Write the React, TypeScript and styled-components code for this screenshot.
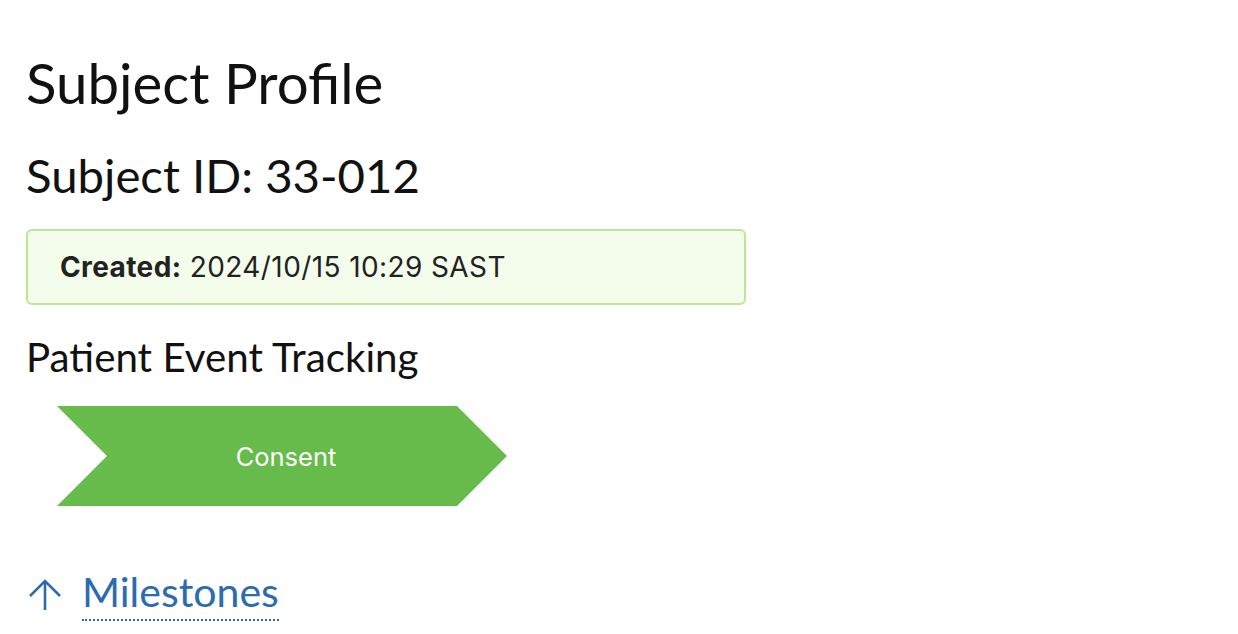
import React from 'react';
import styled, { createGlobalStyle } from 'styled-components';

const GlobalStyle = createGlobalStyle`
	html, body {
		margin: 0;
		padding: 0;
		background: #ffffff;
	}
	body {
		font-family: 'Lato', 'Noto Sans', sans-serif;
		color: #111111;
	}
`;

const Page = styled.div`
	display: flex;
	flex-direction: column;
	align-items: flex-start;
	padding: 48px 26px 0 26px;
`;

const Title = styled.h1`
	margin: 0;
	font-size: 56.4px;
	font-weight: 400;
	line-height: 68px;
`;

const SubTitle = styled.h2`
	margin: 31px 0 0 0;
	font-size: 47.3px;
	font-weight: 400;
	line-height: 56px;
`;

const InfoCard = styled.div`
	margin-top: 26px;
	width: 720px;
	box-sizing: border-box;
	height: 76px;
	display: flex;
	align-items: center;
	padding: 0 32px;
	background: #f4fdec;
	border: 2px solid #b8e994;
	border-radius: 6px;
	font-family: 'Inter', 'Roboto', sans-serif;
	font-size: 28px;
	letter-spacing: 0.4px;
	color: #222222;
	white-space: pre;
`;

const Label = styled.strong`
	font-weight: 700;
`;

const SectionTitle = styled.h3`
	margin: 28px 0 0 0;
	font-size: 40.3px;
	font-weight: 400;
	line-height: 48px;
`;

const Track = styled.div`
	display: flex;
	margin: 25px 0 0 31px;
`;

const Step = styled.div<{ $color: string }>`
	width: 450px;
	height: 100px;
	box-sizing: border-box;
	padding-left: 8px;
	display: flex;
	align-items: center;
	justify-content: center;
	background: ${(p) => p.$color};
	clip-path: polygon(0 0, 400px 0, 100% 50%, 400px 100%, 0 100%, 50px 50%);
	color: #ffffff;
	font-family: 'Inter', 'Roboto', sans-serif;
	font-size: 25.5px;
`;

const BackLink = styled.a`
	margin: 62px 0 0 2px;
	display: flex;
	align-items: center;
	gap: 20px;
	color: #2c6bb0;
	text-decoration: none;
	font-size: 41px;
`;

const LinkText = styled.span`
	line-height: 48px;
	padding-bottom: 3px;
	border-bottom: 2px dotted #2c6bb0;
`;

export default function App() {
	return (
		<>
			<GlobalStyle />
			<Page>
				<Title>Subject Profile</Title>
				<SubTitle>Subject ID: 33-012</SubTitle>
				<InfoCard>
					<Label>Created:</Label> 2024/10/15 10:29 SAST
				</InfoCard>
				<SectionTitle>Patient Event Tracking</SectionTitle>
				<Track>
					<Step $color='#67bb4a'>Consent</Step>
				</Track>
				<BackLink href='#'>
					<svg width='34' height='34' viewBox='0 0 34 34' fill='none' stroke='#2c6bb0' strokeWidth='2.6' strokeLinejoin='miter'>
						<path d='M17 3V32' />
						<path d='M2 18L17 3L32 18' />
					</svg>
					<LinkText>Milestones</LinkText>
				</BackLink>
			</Page>
		</>
	);
}
